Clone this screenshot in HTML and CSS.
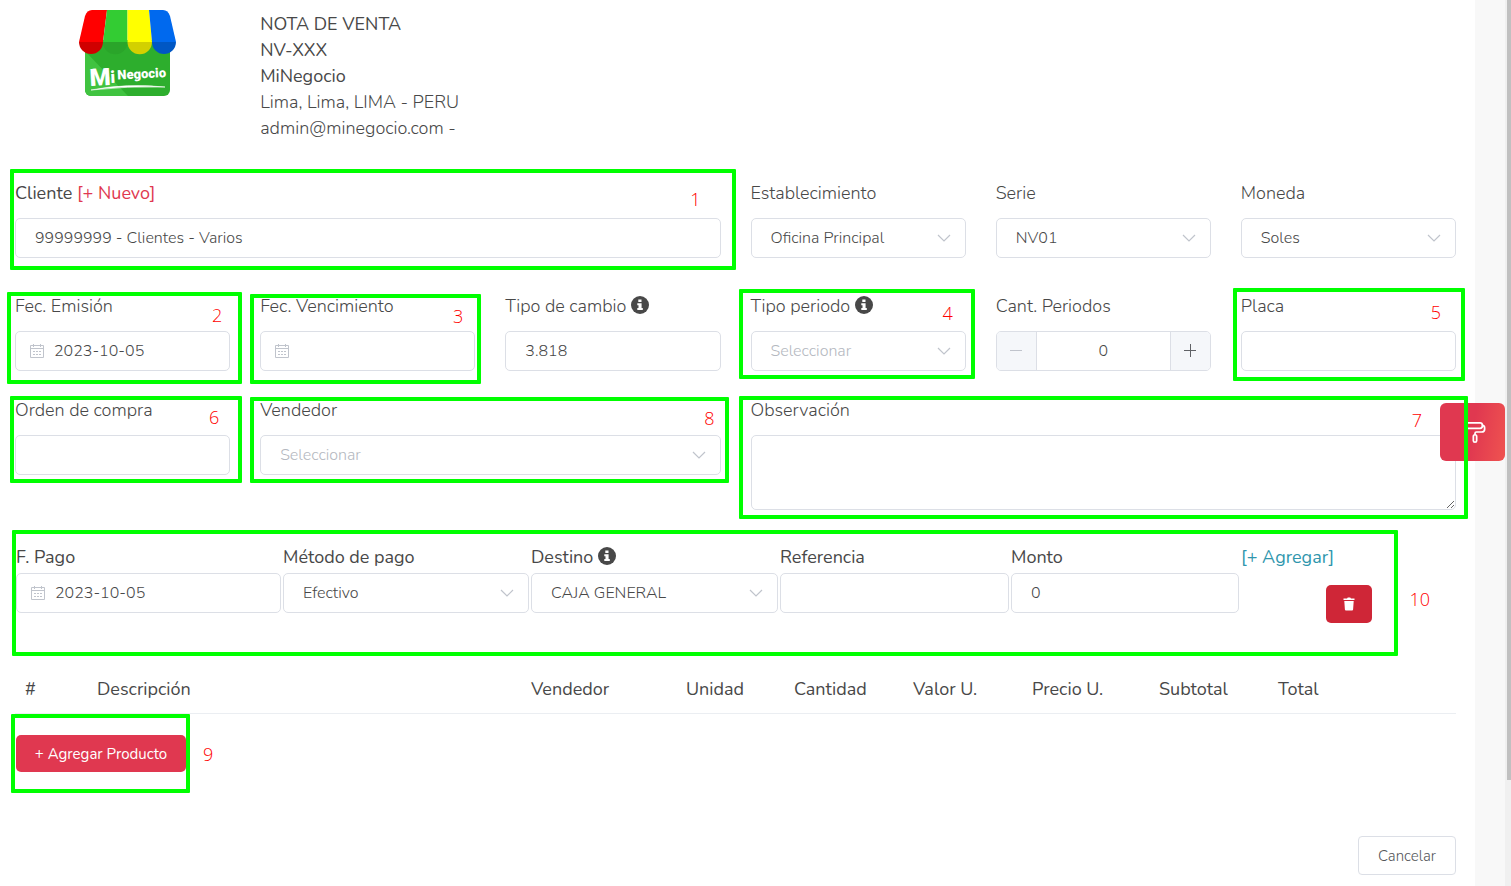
FILE: index.html
```html
<!DOCTYPE html>
<html lang="es">
<head>
<meta charset="utf-8">
<meta name="viewport" content="width=device-width, initial-scale=1">
<title>Nota de venta</title>
<link rel="stylesheet" href="styles.css">
</head>
<body>
<svg class="sprite" aria-hidden="true">
  <symbol id="chevron" viewBox="0 0 14 14"><path d="M1 4l6 6 6-6" fill="none" stroke="#c0c4cc" stroke-width="1.2"/></symbol>
  <symbol id="calendar" viewBox="0 0 16 16"><path d="M1.5 2.500h13v12h-13zM1.500 5.500h13M4.500 1v3M11.500 1v3M4 8.500h2M7 8.500h2M10 8.500h2M4 11.500h2M7 11.500h2M10 11.500h2" fill="none" stroke="#c0c4cc"/></symbol>
  <symbol id="info" viewBox="0 0 18 18"><circle cx="9" cy="9" r="9" fill="#484848"/><path d="M7.300 3.400h3.200v2.700H7.300zM6.300 7.300h4.300v4.600h1.200v2H6.300v-2h1.200V9.200H6.300z" fill="#fff"/></symbol>
</svg>
<div class="page">
  <main class="panel">
    <header class="head">
      <svg class="logo" viewBox="0 0 97 87" role="img" aria-label="Mi Negocio">
        <path d="M6 30h85v50a6 6 0 0 1-6 6H12a6 6 0 0 1-6-6z" fill="#2dae2d"/>
        <path d="M6 41l43 45H12a6 6 0 0 1-6-6z" fill="#40c340"/>
        <path d="M13 0h15l-4 32H0L6 6Q8 0 13 0z" fill="#f00"/>
        <path d="M28 0h20.500v32H24z" fill="#3c3"/>
        <path d="M48.500 0H70l3 32H48.500z" fill="#ff0"/>
        <path d="M70 0h14q5 0 7 6l6 26H73z" fill="#0069ee"/>
        <path d="M0 32h24a12 12 0 0 1-24 0z" fill="#d00000"/>
        <path d="M24 32h24.500a12 12 0 0 1-24.500 0z" fill="#2aa52a"/>
        <path d="M48.500 32H73a12 12 0 0 1-24.500 0z" fill="#d3d000"/>
        <path d="M73 32h24a12 12 0 0 1-24 0z" fill="#0057c4"/>
        <g fill="#fff" class="logo-text" transform="rotate(-3 12 78)">
          <text x="11" y="76" font-size="24">M</text>
          <text x="32" y="74" font-size="17">i</text>
          <text x="39" y="71" font-size="13">Negocio</text>
        </g>
        <path d="M12 80Q48 73 86 77Q48 76 12 80z" fill="#fff" stroke="#fff" stroke-width=".6"/>
      </svg>
      <div class="company">
        <div class="strong">NOTA DE VENTA</div>
        <div class="strong">NV-XXX</div>
        <div class="strong">MiNegocio</div>
        <div>Lima, Lima, LIMA - PERU</div>
        <div>admin@minegocio.com -</div>
      </div>
    </header>

    <form class="form">
      <div class="grid">
        <div class="field span3">
          <div class="label strong"><label for="cliente">Cliente</label> <a class="new" href="#">[+ Nuevo]</a></div>
          <input id="cliente" class="control" type="text" value="99999999 - Clientes - Varios">
          <span class="mark mark1"><b>1</b></span>
        </div>
        <div class="field">
          <label class="label" for="est">Establecimiento</label>
          <div class="pick"><select id="est" class="control"><option>Oficina Principal</option></select><svg><use href="#chevron"/></svg></div>
        </div>
        <div class="field">
          <label class="label" for="serie">Serie</label>
          <div class="pick"><select id="serie" class="control"><option>NV01</option></select><svg><use href="#chevron"/></svg></div>
        </div>
        <div class="field">
          <label class="label" for="moneda">Moneda</label>
          <div class="pick"><select id="moneda" class="control"><option>Soles</option></select><svg><use href="#chevron"/></svg></div>
        </div>
      </div>

      <div class="grid row2">
        <div class="field">
          <label class="label" for="emision">Fec. Emisión</label>
          <div class="date"><svg><use href="#calendar"/></svg><input id="emision" class="control" type="text" value="2023-10-05"></div>
          <span class="mark mark2"><b>2</b></span>
        </div>
        <div class="field">
          <label class="label" for="venc">Fec. Vencimiento</label>
          <div class="date"><svg><use href="#calendar"/></svg><input id="venc" class="control" type="text"></div>
          <span class="mark mark3"><b>3</b></span>
        </div>
        <div class="field">
          <label class="label" for="cambio">Tipo de cambio <svg class="info"><use href="#info"/></svg></label>
          <input id="cambio" class="control" type="text" value="3.818">
        </div>
        <div class="field">
          <label class="label" for="periodo">Tipo periodo <svg class="info"><use href="#info"/></svg></label>
          <div class="pick"><select id="periodo" class="control empty"><option>Seleccionar</option></select><svg><use href="#chevron"/></svg></div>
          <span class="mark mark4"><b>4</b></span>
        </div>
        <div class="field">
          <label class="label" for="cant">Cant. Periodos</label>
          <div class="stepper">
            <button type="button" aria-label="Menos" disabled><svg viewBox="0 0 14 14"><path d="M1 6.500h12" stroke="#c0c4cc"/></svg></button>
            <input id="cant" type="text" value="0">
            <button type="button" aria-label="Más"><svg viewBox="0 0 14 14"><path d="M1 6.500h12M7.500 0v13" stroke="#606266"/></svg></button>
          </div>
        </div>
        <div class="field">
          <label class="label" for="placa">Placa</label>
          <input id="placa" class="control" type="text">
          <span class="mark mark5"><b>5</b></span>
        </div>
      </div>

      <div class="grid row3">
        <div class="field">
          <label class="label" for="orden">Orden de compra</label>
          <input id="orden" class="control" type="text">
          <span class="mark mark6"><b>6</b></span>
        </div>
        <div class="field span2">
          <label class="label" for="vendedor">Vendedor</label>
          <div class="pick"><select id="vendedor" class="control empty"><option>Seleccionar</option></select><svg><use href="#chevron"/></svg></div>
          <span class="mark mark8"><b>8</b></span>
        </div>
        <div class="field span3">
          <label class="label" for="obs">Observación</label>
          <textarea id="obs" class="control area"></textarea>
          <span class="mark mark7"><b>7</b></span>
        </div>
      </div>

      <section class="pay">
        <div class="field">
          <label class="label strong" for="fpago">F. Pago</label>
          <div class="date"><svg><use href="#calendar"/></svg><input id="fpago" class="control" type="text" value="2023-10-05"></div>
        </div>
        <div class="field">
          <label class="label strong" for="metodo">Método de pago</label>
          <div class="pick"><select id="metodo" class="control"><option>Efectivo</option></select><svg><use href="#chevron"/></svg></div>
        </div>
        <div class="field">
          <label class="label strong" for="destino">Destino <svg class="info"><use href="#info"/></svg></label>
          <div class="pick"><select id="destino" class="control"><option>CAJA GENERAL</option></select><svg><use href="#chevron"/></svg></div>
        </div>
        <div class="field">
          <label class="label strong" for="ref">Referencia</label>
          <input id="ref" class="control" type="text">
        </div>
        <div class="field">
          <label class="label strong" for="monto">Monto</label>
          <input id="monto" class="control" type="text" value="0">
        </div>
        <div class="actions">
          <a class="add strong" href="#">[+ Agregar]</a>
          <button class="trash" type="button" aria-label="Eliminar"><svg viewBox="0 0 12 14"><path d="M.5 1.500h3.500L4.800.5h2.400l.8 1h3.500V3H.5zM1.300 4h9.400l-.6 8.500q-.1 1-1 1H2.900q-.9 0-1-1z" fill="#fff"/></svg></button>
        </div>
        <span class="mark mark10"><b>10</b></span>
      </section>

      <table class="items">
        <colgroup><col class="c-num"><col><col class="c-seller"><col class="c-unit"><col class="c-mid"><col class="c-mid"><col class="c-price"><col class="c-mid"><col class="c-total"></colgroup>
        <thead><tr><th>#</th><th>Descripción</th><th>Vendedor</th><th>Unidad</th><th>Cantidad</th><th>Valor U.</th><th>Precio U.</th><th>Subtotal</th><th>Total</th></tr></thead>
      </table>

      <div class="product">
        <button class="primary" type="button">+ Agregar Producto</button>
        <span class="mark mark9"><b>9</b></span>
      </div>

      <footer class="foot"><button class="cancel" type="button">Cancelar</button></footer>
    </form>
  </main>
  <div class="track"><div class="thumb"></div></div>
  <button class="theme" type="button" aria-label="Tema"><svg viewBox="0 0 24 24" fill="none" stroke="#fff" stroke-width="1.900" stroke-linejoin="round"><path d="M3.500 2h14a2.500 2.500 0 0 1 2.500 2.500v1A2.500 2.500 0 0 1 17.500 8h-14A2.500 2.500 0 0 1 1 5.500v-1A2.500 2.500 0 0 1 3.500 2zM20 4.500q2.500.5 2.500 3v1.500q0 3-3.500 3h-5.500q-1.500 0-1.500 1.500V15M12 15q1.800 0 1.800 2v4.500q0 1.500-1.800 1.500t-1.800-1.500V17q0-2 1.800-2z"/></svg></button>
</div>
</body>
</html>
```
FILE: styles.css
```css
* { box-sizing: border-box; }
body { margin: 0; background: #f8f8f8; color: #484848; font: 300 18px/26px "Nunito", "Noto Sans", sans-serif; }
a { text-decoration: none; }
button, input, select, textarea { font: inherit; color: inherit; margin: 0; }
.strong { font-weight: 400; }
.sprite { display: none; }
.page { position: relative; display: flex; min-height: 100vh; overflow: hidden; }
.panel { flex: 1; min-width: 0; margin-right: 30px; padding: 10px 19px 11px 15px; background: #fff; }
.track { width: 6px; padding-left: 2px; background: #f0f0f0; }
.thumb { height: 88vh; background: #c0c0c0; }

.head { display: grid; grid-template-columns: repeat(6, 1fr); gap: 30px; }
.logo { width: 97px; height: 87px; margin-left: 64px; }
.logo-text { font-family: "Roboto", sans-serif; font-weight: 900; }
.company { grid-column: span 3; padding-top: 1px; }

.grid { display: grid; grid-template-columns: repeat(6, minmax(0, 1fr)); column-gap: 30px; margin-top: 39px; }
.row2 { margin-top: 35px; }
.row3 { margin-top: 26px; }
.field { position: relative; display: flex; flex-direction: column; gap: 12px; min-width: 0; }
.span2 { grid-column: span 2; }
.span3 { grid-column: span 3; }
.label { display: block; height: 26px; white-space: nowrap; }
.new { color: #e03850; }
.info { width: 18px; height: 18px; vertical-align: -2px; }

.control { display: block; width: 100%; height: 40px; padding: 0 19px; border: 1px solid #dcdfe6; border-radius: 5px; background: #fff; font-size: 16px; appearance: none; outline: 0; }
.empty { color: #b4b8c0; }
.area { height: 75px; resize: vertical; }
.pick, .date { display: grid; align-items: center; }
.pick > *, .date > * { grid-area: 1 / 1; }
.pick svg { width: 14px; height: 14px; justify-self: end; margin-right: 15px; pointer-events: none; }
.date svg { width: 16px; height: 16px; margin-left: 14px; z-index: 1; }
.date .control { padding-left: 38px; }
.stepper { display: flex; height: 40px; border: 1px solid #dcdfe6; border-radius: 5px; overflow: hidden; }
.stepper button { display: grid; place-items: center; width: 39px; padding: 0; border: 0; background: #f5f7fa; }
.stepper svg { width: 14px; height: 14px; }
.stepper input { flex: 1; min-width: 0; border: solid #dcdfe6; border-width: 0 1px; text-align: center; font-size: 16px; }

.pay { position: relative; display: grid; grid-template-columns: 265fr 246fr 247fr 229fr 228fr 215fr; gap: 2px; margin: 34px 0 41px 1px; }
.pay .field { gap: 3px; }
.actions { display: flex; flex-direction: column; gap: 15px; }
.add { color: #2f96ad; }
.trash { display: grid; place-items: center; align-self: center; width: 46px; height: 38px; padding: 0; border: 0; border-radius: 5px; background: #cf2637; }
.trash svg { width: 12px; height: 14px; }

.items { width: 100%; table-layout: fixed; border-collapse: collapse; }
.items th { padding: 12px 0 11px 10px; border-bottom: 1px solid #ebeef2; text-align: left; font-weight: 400; white-space: nowrap; }
.c-num { width: 72px; }
.c-seller { width: 155px; }
.c-unit { width: 108px; }
.c-mid { width: 119px; }
.c-price { width: 127px; }
.c-total { width: 188px; }

.product { position: relative; width: 170px; margin: 21px 0 64px 1px; }
.primary { display: block; width: 100%; height: 37px; padding: 0; border: 0; border-radius: 5px; background: #e03850; color: #fff; font-size: 15px; font-weight: 400; white-space: nowrap; }
.foot { display: flex; justify-content: flex-end; }
.cancel { width: 98px; height: 39px; padding: 0; border: 1px solid #dcdfe6; border-radius: 4px; background: #fff; color: #54565a; font-size: 15px; }
.theme { position: absolute; top: 403px; right: 6px; display: grid; place-items: center; width: 65px; height: 58px; padding: 0 0 0 4px; border: 0; border-radius: 6px; background: linear-gradient(100deg, #e03850 50%, #ef5350); }
.theme svg { width: 22px; height: 24px; }

.mark { position: absolute; z-index: 2; border: 4px solid #0f0; border-radius: 1px; pointer-events: none; }
.mark b { position: absolute; color: #f00; font: 300 18px/24px "Open Sans", sans-serif; }
.mark1 { inset: -11px -15px -12px -5px; }
.mark1 b { top: 14px; right: 31px; }
.mark2 { inset: -1px -12px -13px -8px; }
.mark2 b { top: 7px; right: 16px; }
.mark3 { inset: 1px -6px -13px -10px; }
.mark3 b { top: 6px; right: 14px; }
.mark4 { inset: -4px -9px -8px -12px; }
.mark4 b { top: 8px; right: 18px; }
.mark5 { inset: -5px -9px -10px -8px; }
.mark5 b { top: 8px; right: 20px; }
.mark6 { inset: -1px -12px 27px -5px; }
.mark6 b { top: 5px; right: 19px; }
.mark7 { inset: -1px -12px -9px -12px; }
.mark7 b { top: 8px; right: 42px; }
.mark8 { inset: 0 -8px 27px -10px; }
.mark8 b { top: 5px; right: 10px; }
.mark9 { inset: -21px -4px -21px -5px; }
.mark9 b { top: 24px; left: 188px; }
.mark10 { inset: -14px 58px -33px -4px; }
.mark10 b { top: 53px; right: -36px; }
```
